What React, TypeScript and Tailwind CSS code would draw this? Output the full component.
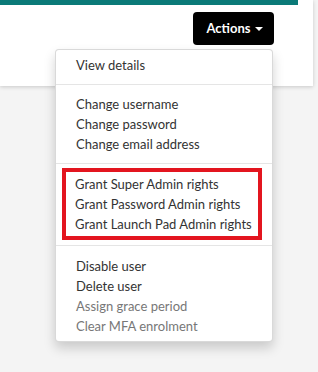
import React from "react";

const Item = ({ label, muted }: { label: string; muted?: boolean }) => (
  <div
    className={`h-5 px-5 text-[13px] leading-5 whitespace-nowrap ${
      muted ? "text-[#777777]" : "text-[#333333]"
    }`}
  >
    {label}
  </div>
);

const Divider = () => <div className="my-[9px] h-px bg-[#e5e5e5]" />;

export default function App() {
  return (
    <div
      className="h-[372px] w-[318px] overflow-hidden bg-[#f4f4f4]"
      style={{ fontFamily: 'Lato, "Noto Sans", sans-serif' }}
    >
      <div className="h-[86px] w-[313px] bg-white pr-[15px] shadow-[0_1px_4px_rgba(0,0,0,0.18)]">
        <div className="h-[5px] bg-[#0b7a78]" />
        <div className="flex justify-end pr-[24px] pt-[7px]">
          <div className="relative">
            <button className="flex h-[33px] w-[81px] items-center justify-center gap-[4px] rounded-[4px] bg-black pl-[2px] text-[13px] font-bold text-white">
              Actions
              <span className="mt-[1px] h-0 w-0 border-x-[4px] border-t-[4px] border-x-transparent border-t-white" />
            </button>
            <div className="absolute right-[1px] top-[37px] z-10 w-[218px] rounded-[4px] border border-black/15 bg-white py-[5px] shadow-[0_6px_12px_rgba(0,0,0,0.175)]">
              <Item label="View details" />
              <Divider />
              <Item label="Change username" />
              <Item label="Change password" />
              <Item label="Change email address" />
              <div className="mb-[4px] mt-[9px] h-px bg-[#e5e5e5]" />
              <div className="ml-[6px] mr-[10px] border-4 border-[#e3151f] py-[2px]">
                <div className="[&>div]:pl-[9px]">
                  <Item label="Grant Super Admin rights" />
                  <Item label="Grant Password Admin rights" />
                  <Item label="Grant Launch Pad Admin rights" />
                </div>
              </div>
              <div className="mb-[10px] mt-[5px] h-px bg-[#e5e5e5]" />
              <Item label="Disable user" />
              <Item label="Delete user" />
              <Item label="Assign grace period" muted />
              <Item label="Clear MFA enrolment" muted />
            </div>
          </div>
        </div>
      </div>
    </div>
  );
}
